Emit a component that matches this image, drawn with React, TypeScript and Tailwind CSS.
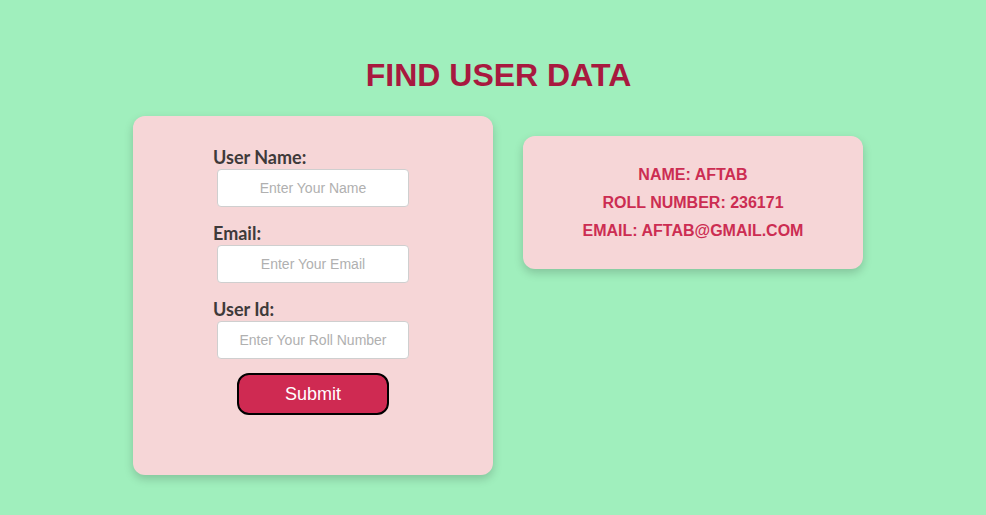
export default function App() {
  return (
    <div className="min-h-[515px] w-full bg-[#a0efbd] pt-[57px] font-['Liberation_Sans',Arial,sans-serif]">
      {/* Heading */}
      <h1 className="pl-[11px] text-center text-[32px] font-bold leading-[37px] text-[#a8193f]">
        FIND USER DATA
      </h1>

      <div className="mt-[22px] flex items-start gap-[30px] pl-[133px]">
        {/* Search form */}
        <form className="flex h-[359px] w-[360px] flex-col items-center rounded-xl bg-[#f6d6d7] pt-[30px] shadow-[0_4px_10px_rgba(0,0,0,0.18)]">
          <div className="w-[200px] font-['Lato',sans-serif]">
            <label className="block text-[18px] font-bold leading-[22px] text-[#3e3a3a]">
              User Name:
            </label>
            <input
              placeholder="Enter Your Name"
              className="ml-1 mt-px h-[38px] w-[192px] rounded border border-[#cfcfcf] bg-white text-center font-['Liberation_Sans',Arial,sans-serif] text-sm placeholder:text-[#b0b0b0]"
            />
            <label className="mt-[15px] block text-[18px] font-bold leading-[22px] text-[#3e3a3a]">
              Email:
            </label>
            <input
              placeholder="Enter Your Email"
              className="ml-1 mt-px h-[38px] w-[192px] rounded border border-[#cfcfcf] bg-white text-center font-['Liberation_Sans',Arial,sans-serif] text-sm placeholder:text-[#b0b0b0]"
            />
            <label className="mt-[15px] block text-[18px] font-bold leading-[22px] text-[#3e3a3a]">
              User Id:
            </label>
            <input
              placeholder="Enter Your Roll Number"
              className="ml-1 mt-px h-[38px] w-[192px] rounded border border-[#cfcfcf] bg-white text-center font-['Liberation_Sans',Arial,sans-serif] text-sm placeholder:text-[#b0b0b0]"
            />
          </div>
          <button
            type="button"
            className="mt-[14px] h-[42px] w-[152px] rounded-xl border-2 border-black bg-[#cf2a52] text-lg text-white"
          >
            Submit
          </button>
        </form>

        {/* Result */}
        <div className="mt-5 flex w-[340px] flex-col items-center rounded-xl bg-[#f6d6d7] pb-[24px] pt-[25px] text-base font-bold leading-[28px] text-[#cc2d52] shadow-[0_4px_10px_rgba(0,0,0,0.18)]">
          <p>NAME: AFTAB</p>
          <p>ROLL NUMBER: 236171</p>
          <p>EMAIL: AFTAB@GMAIL.COM</p>
        </div>
      </div>
    </div>
  );
}
